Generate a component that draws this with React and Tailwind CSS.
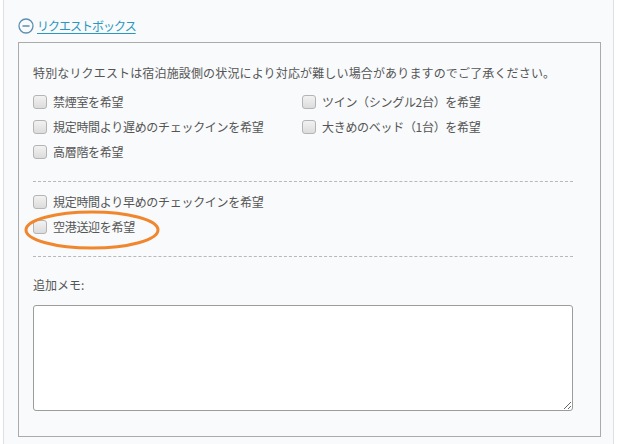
import React from 'react';

const jp = { fontFamily: '"Noto Sans CJK JP", "Noto Sans", sans-serif' };

const Check = ({ label }) => (
  <label className="flex h-[25px] items-center gap-[6px] text-[12px] text-[#555]">
    <span className="h-[14px] w-[14px] shrink-0 rounded-[3px] border border-[#b4b4b4] bg-gradient-to-b from-[#f2f2f2] to-[#dcdcdc]" />
    <span className="tracking-[-0.3px]">{label}</span>
  </label>
);

const App = () => {
  return (
    <div className="h-[444px] w-[619px] overflow-hidden bg-white" style={jp}>
      <div className="ml-[3px] h-full w-[611px] border-x border-[#dde1e4] bg-[#f8fafb] pl-[14px] pr-[12px] pt-[18px]">
        <div className="flex h-[16px] items-center gap-[3px]">
          <svg width="16" height="16" viewBox="0 0 16 16">
            <circle cx="8" cy="8" r="7" fill="none" stroke="#5b8fb3" strokeWidth="1.3" />
            <line x1="4.5" y1="8" x2="11.5" y2="8" stroke="#5b8fb3" strokeWidth="1.5" />
          </svg>
          <span className="text-[12px] tracking-[-1px] text-[#2a97bd] underline underline-offset-2">リクエストボックス</span>
        </div>

        <div className="relative mt-[8px] border border-[#ababab] bg-[#f8fafb] pb-[25px] pl-[14px] pr-[27px] pt-[20px]">
          <p className="h-[20px] text-[12px] leading-[20px] tracking-[0.15px] text-[#555]">
            特別なリクエストは宿泊施設側の状況により対応が難しい場合がありますのでご了承ください。
          </p>

          <div className="mt-[6px] grid grid-cols-[269px_1fr]">
            <Check label="禁煙室を希望" />
            <Check label="ツイン（シングル2台）を希望" />
            <Check label="規定時間より遅めのチェックインを希望" />
            <Check label="大きめのベッド（1台）を希望" />
            <Check label="高層階を希望" />
          </div>

          <div className="mt-[17px] border-t border-dashed border-[#b8b8b8]" />

          <div className="mt-[7px]">
            <Check label="規定時間より早めのチェックインを希望" />
            <Check label="空港送迎を希望" />
          </div>

          <div className="mt-[17px] border-t border-dashed border-[#b8b8b8]" />

          <p className="mt-[18px] h-[20px] text-[12px] leading-[20px] text-[#555]">追加メモ:</p>

          <textarea className="mt-[10px] block h-[106px] w-full resize rounded-[3px] border border-[#9c9c9c] bg-white" />

          <svg className="pointer-events-none absolute left-[4px] top-[167px]" width="140" height="42" viewBox="0 0 140 42">
            <ellipse cx="69" cy="20" rx="66" ry="18" fill="none" stroke="#f0862d" strokeWidth="3" />
          </svg>
        </div>
      </div>
    </div>
  );
};

export default App;
